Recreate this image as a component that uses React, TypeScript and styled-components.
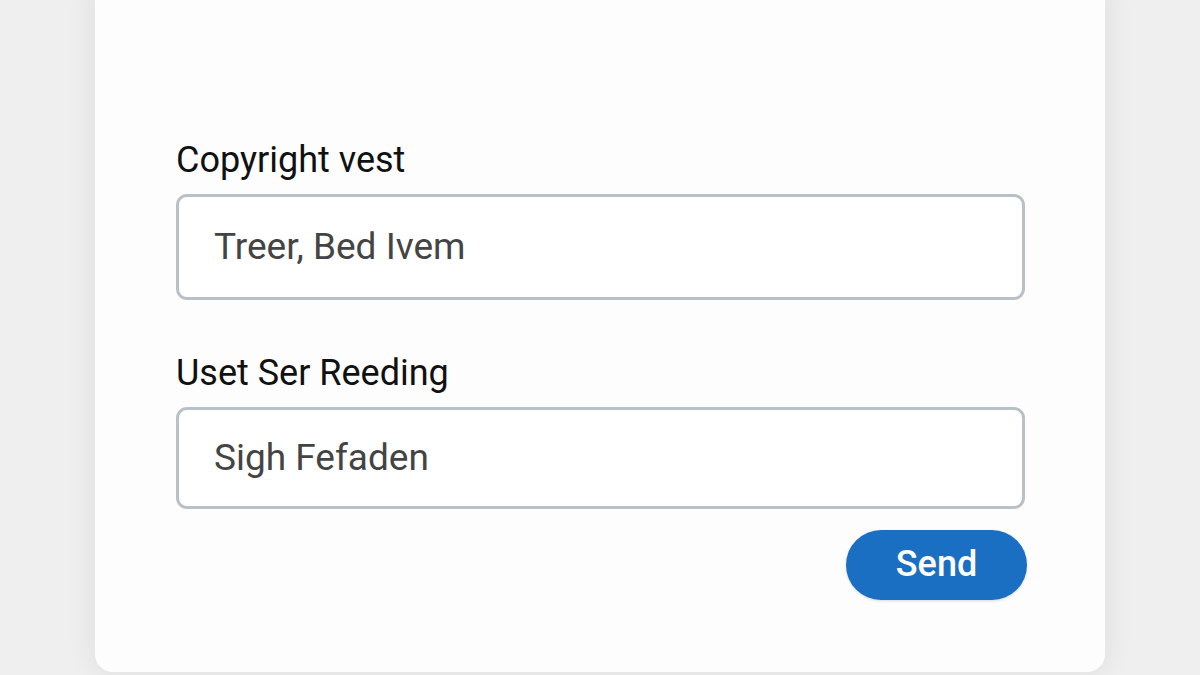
import React from "react";
import styled, { createGlobalStyle } from "styled-components";

const Global = createGlobalStyle`
  html, body { margin: 0; padding: 0; }
  body {
    background: #efefef;
    font-family: Roboto, "Liberation Sans", Arial, sans-serif;
    overflow: hidden;
    height: 675px;
  }
`;

const Page = styled.div`
  width: 1200px;
  height: 675px;
  display: flex;
  justify-content: center;
  align-items: flex-start;
`;

const Card = styled.div`
  width: 1010px;
  height: 694px;
  margin-top: -22px;
  background: #fdfdfd;
  border-radius: 18px;
  box-shadow: 0 0 30px rgba(0, 0, 0, 0.08);
  box-sizing: border-box;
  padding: 161px 80px 0 81px;
  display: flex;
  flex-direction: column;
`;

const Field = styled.div<{ $mb: number }>`
  display: flex;
  flex-direction: column;
  gap: 13px;
  margin-bottom: ${(p) => p.$mb}px;
`;

const Label = styled.label`
  font-size: 36px;
  line-height: 42px;
  color: #111;
  font-weight: 400;
`;

const Input = styled.div<{ $h: number }>`
  height: ${(p) => p.$h}px;
  box-sizing: border-box;
  border: 3px solid #b9c1c8;
  border-radius: 11px;
  background: #fff;
  display: flex;
  align-items: center;
  padding-left: 35px;
  padding-bottom: 2px;
  font-size: 37px;
  color: #444;
`;

const Actions = styled.div`
  display: flex;
  justify-content: flex-end;
  margin-right: -2px;
`;

const Button = styled.button`
  width: 181px;
  height: 70px;
  border: none;
  border-radius: 35px;
  background: #1b6fc3;
  color: #fff;
  font-family: Roboto, "Liberation Sans", Arial, sans-serif;
  font-size: 36px;
  font-weight: 500;
  padding: 0 0 2px;
  box-shadow: 0 1px 3px rgba(0, 0, 0, 0.15);
`;

export default function App() {
  return (
    <>
      <Global />
      <Page>
        <Card>
          <Field $mb={52}>
            <Label>Copyright vest</Label>
            <Input $h={106}>Treer, Bed Ivem</Input>
          </Field>
          <Field $mb={21}>
            <Label>Uset Ser Reeding</Label>
            <Input $h={102}>Sigh Fefaden</Input>
          </Field>
          <Actions>
            <Button>Send</Button>
          </Actions>
        </Card>
      </Page>
    </>
  );
}
